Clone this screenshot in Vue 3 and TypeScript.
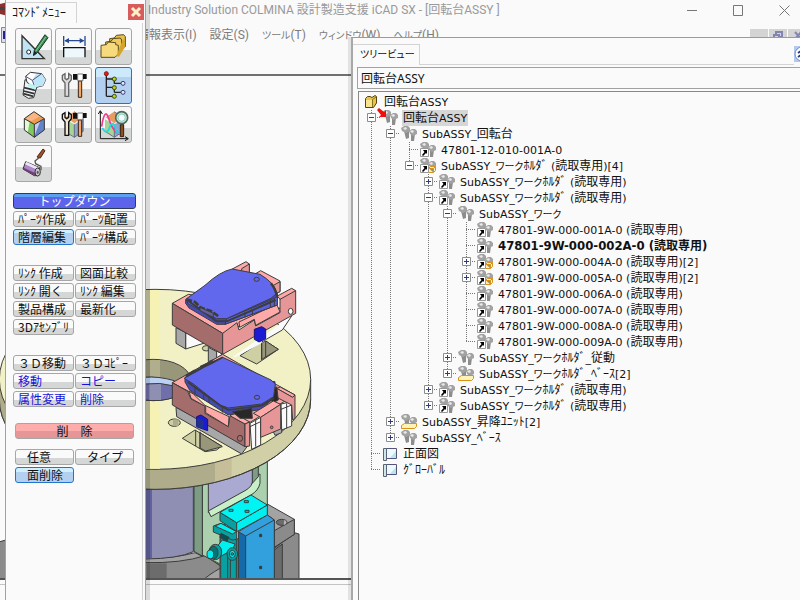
<script setup lang="ts">
import { computed, ref } from 'vue'

interface Node {
  level: number
  text: string
  kind?: 'folder' | 'part' | 'view'
  sign?: '+' | '-'
  link?: boolean
  box?: boolean
  tray?: boolean
  active?: boolean
  bold?: boolean
}

const holder = 'SubASSY_ワークﾎﾙﾀﾞ (読取専用)'
const part = (id: string, extra: Partial<Node> = {}): Node => ({
  level: 6, text: `47801-9W-000-${id}-0 (読取専用)`, link: true, ...extra,
})

const nodes: Node[] = [
  { level: 0, text: '回転台ASSY', kind: 'folder' },
  { level: 1, text: '回転台ASSY', sign: '-', active: true },
  { level: 2, text: 'SubASSY_回転台', sign: '-' },
  { level: 3, text: '47801-12-010-001A-0', link: true },
  { level: 3, text: `${holder}[4]`, sign: '-', link: true, box: true },
  { level: 4, text: holder, sign: '+', link: true },
  { level: 4, text: holder, sign: '-', link: true },
  { level: 5, text: 'SubASSY_ワーク', sign: '-' },
  part('001A'),
  part('002A', { bold: true }),
  { ...part('004A', { sign: '+', box: true }), text: '47801-9W-000-004A-0 (読取専用)[2]' },
  { ...part('005A', { sign: '+', box: true }), text: '47801-9W-000-005A-0 (読取専用)[2]' },
  part('006A'),
  part('007A'),
  part('008A'),
  part('009A'),
  { level: 5, text: 'SubASSY_ワークﾎﾙﾀﾞ_従動', sign: '+' },
  { level: 5, text: 'SubASSY_ワークﾎﾙﾀﾞ_ﾍﾞｰｽ[2]', sign: '+', tray: true },
  { level: 4, text: holder, sign: '+', link: true },
  { level: 4, text: holder, sign: '+', link: true },
  { level: 2, text: 'SubASSY_昇降ﾕﾆｯﾄ[2]', sign: '+', tray: true },
  { level: 2, text: 'SubASSY_ﾍﾞｰｽ', sign: '+' },
  { level: 1, text: '正面図', kind: 'view' },
  { level: 1, text: 'ｸﾞﾛｰﾊﾞﾙ', kind: 'view' },
]

const closed = ref<number[]>([])
function toggle(i: number) {
  closed.value = closed.value.includes(i) ? closed.value.filter(n => n !== i) : [...closed.value, i]
}

// Splits a label into runs so that full-width kana can be set tighter than kanji.
function runs(text: string) {
  return (text.match(/[ァ-ヶー]+|[\u3000-\u30a0\u4e00-\u9fff\uff61-\uff9f]+|[\x00-\x7f]+/g) ?? []).map(t => ({
    t,
    c: /^[ァ-ヶー]/.test(t) ? 'kana' : /^[\x00-\x7f]/.test(t) ? 'latin' : 'han',
  }))
}

const rows = computed(() => {
  const shown: { node: Node; id: number }[] = []
  let hide = Infinity
  nodes.forEach((node, id) => {
    if (node.level > hide) return
    hide = closed.value.includes(id) ? node.level : Infinity
    shown.push({ node, id })
  })
  return shown.map(({ node, id }, i) => {
    const guides: string[] = []
    for (let c = 1; c <= node.level; c++) {
      const next = shown.slice(i + 1).find(r => r.node.level <= c)
      const goesOn = next !== undefined && next.node.level === c
      if (c < node.level) guides.push(goesOn ? 'full' : 'none')
      else guides.push(goesOn ? 'full arm' : 'half arm')
    }
    const sign = node.sign === '-' && closed.value.includes(id) ? '+' : node.sign
    return { ...node, id, guides, sign, runs: runs(node.text) }
  })
})

const menus = ['情報表示(I)', '設定(S)', 'ツール(T)', 'ウィンドウ(W)', 'ヘルプ(H)'].map(runs)
const tools = ['スケッチ', '寸法', 'フォルダ', 'ボルト', '工具', 'ツリー', 'ソリッド', 'ソリッド編集', '解析', '塗装']

interface Cmd { t: string; on?: boolean; blue?: boolean }
const groups: { items: Cmd[] }[] = [
  { items: [{ t: 'ﾊﾟｰﾂ作成' }, { t: 'ﾊﾟｰﾂ配置' }, { t: '階層編集', on: true }, { t: 'ﾊﾟｰﾂ構成' }] },
  { items: [{ t: 'ﾘﾝｸ 作成' }, { t: '図面比較' }, { t: 'ﾘﾝｸ 開く' }, { t: 'ﾘﾝｸ 編集' }, { t: '製品構成' }, { t: '最新化' }, { t: '3Dｱｾﾝﾌﾞﾘ' }] },
  { items: [{ t: '３Ｄ移動' }, { t: '３Ｄｺﾋﾟｰ' }, { t: '移動', blue: true }, { t: 'コピー', blue: true }, { t: '属性変更', blue: true }, { t: '削除', blue: true }] },
]
const last: Cmd[] = [{ t: '任意' }, { t: 'タイプ' }, { t: '面削除', on: true }]
const path = ref('回転台ASSY')
</script>

<template>
  <div class="desktop">
    <div class="app">
      <header class="title">
        <svg class="logo" width="16" height="16"><path d="M0 2L8 0V14L0 12Z" fill="#8c3030" /><path d="M0 5H8V8H0Z" fill="#444" /></svg>
        <span class="caption">Industry Solution COLMINA 設計製造支援 iCAD SX - [回転台ASSY ]</span>
        <button class="win" aria-label="最小化"><svg width="11" height="11"><path d="M0 5.5H10" /></svg></button>
        <button class="win" aria-label="最大化"><svg width="11" height="11"><path d="M.5 .5H9.5V10.5H.5Z" /></svg></button>
        <button class="win" aria-label="閉じる"><svg width="11" height="11"><path d="M.5 .5L10.5 10.5M10.5 .5L.5 10.5" /></svg></button>
      </header>
      <nav class="menubar">
        <svg class="logo" width="16" height="16"><path d="M1.500 .5H15.500V15.500H1.500Z" fill="#dde" stroke="#888" /><path d="M3 4H12V12H3Z" fill="#22228c" /></svg>
        <button v-for="(m, i) in menus" :key="i" class="menu"><span v-for="(r, j) in m" :key="j" :class="r.c">{{ r.t }}</span></button>
        <span class="mdi">
          <button aria-label="子ウィンドウ最小化"><svg width="18" height="14"><path d="M5 9H11" /></svg></button>
          <button aria-label="子ウィンドウ復元"><svg width="18" height="14"><path d="M7 6V3H13V8H11M5 6H10V11H5Z" /></svg></button>
          <button aria-label="子ウィンドウ閉じる"><svg width="18" height="14"><path d="M7 3L13 10M13 3L7 10" /></svg></button>
        </span>
      </nav>
      <main class="viewport">
        <svg class="scene" width="352" height="502" viewBox="0 76 352 502">
          <g transform="translate(145 250) scale(.33333)" stroke="#3c3c3c" stroke-width="3" stroke-linejoin="round">
            <!-- grey base, column and bracket -->
            <path d="M-500 900L-432 874L-380 860V1000H-500Z" fill="#8b8b8b" />
            <path d="M0 925Q90 925 150 908L225 945V1000H-60V925Z" fill="#a3a3a3" />
            <path d="M0 938Q110 940 180 917L225 947V955Q190 975 175 990H0Z" fill="#8b8b8b" />
            <path d="M5 940H65V990H5Z" fill="#6c6c6c" stroke="none" />
            <path d="M172 690L367 620V770L225 830V942L172 915Z" fill="#aad0ae" />
            <path d="M147 690H172V918L147 904Z" fill="#7c9c84" />
            <path d="M190 690L325 640V700Q320 714 300 725L190 788Z" fill="#a9a9d2" />
            <path d="M190 783L300 722Q324 710 324 685L345 672V700Q340 722 318 735L225 785L198 800Z" fill="#c8f0c8" />
            <path d="M322 650H340V680L322 700Z" fill="#7c9c84" />
            <path d="M-30 690H145V905Q100 926 0 927H-30Z" fill="#8f8fb4" />
            <path d="M-30 690H21V925H-30Z" fill="#62629c" stroke="none" />
            <!-- grey bracket on the right -->
            <path d="M388 895L448 848L462 852V1000H388Z" fill="#8b8b8b" />
            <path d="M388 900L412 882V1000H388Z" fill="#6c6c6c" />
            <path d="M367 762L448 808V853L388 892V810L367 795Z" fill="#a3a3a3" />
            <path d="M388 842L448 808V853L388 892Z" fill="#8b8b8b" />
            <ellipse cx="410" cy="817" rx="16" ry="9" fill="#6c6c6c" />
            <path d="M418 809Q432 818 416 826Z" fill="#b8b8b8" stroke="none" />
            <!-- blue cylinder body -->
            <path d="M280 845L367 795L388 810V1000H280Z" fill="#32a0dc" />
            <path d="M280 845L302 858V1000H280Z" fill="#146aa8" />
            <path d="M302 858L388 810" fill="none" />
            <path d="M344 853h6v7h-6zM344 949h6v7h-6z" fill="#333" />
            <!-- cyan head and fittings -->
            <path d="M227 840L280 868V1000H227Z" fill="#08a0a0" />
            <path d="M248 890V1000M256 890V1000M274 870V1000" fill="none" />
            <path d="M225 787L275 818V845L225 812Z" fill="#08a0a0" />
            <path d="M275 818L367 765V795L275 845Z" fill="#00f0f0" />
            <path d="M225 787L318 735L367 765L275 818Z" fill="#00f4f4" />
            <path d="M298 752h12v6h-12zM252 778h12v6h-12zM300 781h12v6h-12z" fill="#0cc" />
            <path d="M205 828L228 820L275 845V868L262 870L205 846Z" fill="#08a0a0" />
            <path d="M210 828L228 820L275 845L262 852Z" fill="#00f0f0" />
            <path d="M228 850L252 862L246 874L225 862Z" fill="#055" />
            <path d="M232 870L270 882L262 900L225 920L212 895Z" fill="#00f0f0" />
            <ellipse cx="211" cy="906" rx="19" ry="23" fill="#08a0a0" />
            <ellipse cx="206" cy="908" rx="13" ry="19" fill="#067474" />
            <ellipse cx="196" cy="913" rx="10" ry="13" fill="#00f0f0" />
            <ellipse cx="262" cy="912" rx="16" ry="19" fill="#08a0a0" />
            <ellipse cx="262" cy="912" rx="9" ry="11" fill="#00f0f0" />
            <circle cx="262" cy="912" r="4" fill="#08a0a0" />
            <!-- turntable -->
            <path d="M-437 388V448A467 270 0 0 0 497 448V388Z" fill="#d0cfa6" />
            <path d="M-437 388V448A467 270 0 0 0 210 697V630L30 500Z" fill="#aeac8a" stroke="none" />
            <path d="M210 630V697Q240 690 260 682V620Z" fill="#c5be98" stroke="none" />
            <path d="M-437 448A467 270 0 0 0 497 448" fill="none" />
            <ellipse cx="30" cy="388" rx="467" ry="270" fill="#f1f1c5" />
            <path d="M0 120H15V657H0Z" fill="#c8c8a2" stroke="none" />
            <path d="M15 120H45V656H15Z" fill="#f5f2b4" stroke="none" />
            <ellipse cx="25" cy="390" rx="112" ry="62" fill="#98977a" />
            <path d="M15 330H45V390H15Z" fill="#b0ae8c" stroke="none" />
            <path d="M0 382Q40 378 88 398V442Q50 456 0 450Z" fill="#6f6faa" />
            <path d="M12 398H48V450H12Z" fill="#8f8fb4" stroke="none" />
            <path d="M0 382Q40 378 88 392V408Q45 396 0 402Z" fill="#bcd0f4" />
            <!-- pockets in the table -->
            <path d="M285 317L350 275L365 275L400 298L335 342Z" fill="#cfcfa4" />
            <path d="M362 273L400 298L350 328V278Z" fill="#98977a" />
            <path d="M350 270V330M362 270V322" fill="none" />
            <path d="M112 565L150 540L230 588L215 600L180 605Z" fill="#cfcfa4" />
            <path d="M165 548L232 590L182 603L165 594Z" fill="#98977a" />
            <path d="M152 540V588M165 545V595" fill="none" />
            <ellipse cx="88" cy="518" rx="18" ry="11" fill="#cfcfa4" />
            <path d="M84 508H100V528H84Z" fill="#aeac8a" stroke="none" />
            <!-- upper fixture -->
            <path d="M262 322L440 198L412 240L340 285L270 322Z" fill="#fafafa" stroke="none" />
            <path d="M440 198L412 240L350 276" fill="none" />
            <ellipse cx="184" cy="295" rx="12" ry="8" fill="#cfcfa4" />
            <path d="M122 248L185 277L122 297Z" fill="#fafafa" />
            <path d="M93 233L122 248V297L93 280Z" fill="#a8a8a8" />
            <path d="M190 292L215 305V325L190 335Z" fill="#a8a8a8" />
            <path d="M215 303L232 312L215 325Z" fill="#fafafa" />
            <path d="M262 57L303 35L313 42V80L290 75Z" fill="#ffa9a9" />
            <path d="M290 56L313 42V75L290 70Z" fill="#e69696" />
            <path d="M325 75L347 62L405 93V125L390 130Z" fill="#ffa9a9" />
            <path d="M375 112L405 95V125L390 132Z" fill="#e69696" />
            <path d="M82 160L130 133L405 175L233 250Z" fill="#ffa9a9" />
            <path d="M82 160L233 250V313L82 225Z" fill="#a56c6c" />
            <path d="M233 250L276 218L282 240L328 210L332 228L405 188V140L452 122V190L233 313Z" fill="#e69696" />
            <path d="M397 138L440 115L452 122L405 148Z" fill="#ffa9a9" />
            <path d="M282 216L395 162L405 186L332 226L328 208L284 232Z" fill="#ffa9a9" />
            <ellipse cx="437" cy="184" rx="7" ry="9" fill="#fafafa" />
            <path d="M122 150V160L132 174L215 223H240L397 165V130L370 110Z" fill="#464bb4" />
            <path d="M245 206L378 150L397 140V165L240 223Z" fill="#5960dc" />
            <path d="M300 186V202M322 178V194M376 150V172M388 145V168" fill="none" />
            <path d="M122 148L180 106Q225 64 262 57L345 73Q388 98 396 130L378 145L245 206H215L130 162Z" fill="#6168ee" />
            <path d="M128 152L160 174L215 214H245L392 150" fill="none" stroke-width="6" />
            <path d="M124 148L150 156L166 172L200 184L222 200" fill="none" stroke-width="8" stroke-dasharray="18 5" />
            <path d="M378 100Q392 118 396 140" fill="none" stroke-width="7" />
            <path d="M165 172L205 190V202L165 182Z" fill="#62629c" />
            <ellipse cx="335" cy="88" rx="8" ry="6" fill="none" />
            <path d="M328 238L350 230L362 237V266L342 276L328 268Z" fill="#1b1bd4" stroke="#141478" />
            <!-- lower fixture -->
            <path d="M93 472L310 585L290 612L95 500Z" fill="#a8a8a8" />
            <path d="M385 545L410 530V548L390 556Z" fill="#a8a8a8" />
            <path d="M82 398L233 313L280 340L450 435L310 520Z" fill="#ffa9a9" />
            <path d="M315 520L347 502V585L320 598Z" fill="#fafafa" />
            <path d="M408 462L440 455V528L410 540Z" fill="#fafafa" />
            <path d="M332 508V590M425 460V535M315 530L347 515M408 478L440 465" fill="none" />
            <path d="M82 398L128 424L138 447L180 468V490L250 530L255 497L300 522V590L82 465Z" fill="#a56c6c" />
            <path d="M132 424L145 432L180 466L252 500L250 530L182 488L182 470L138 445Z" fill="#ffa9a9" />
            <path d="M255 497L268 490L314 516L300 522Z" fill="#ffa9a9" />
            <path d="M300 522L314 516V588L300 590Z" fill="#e69696" />
            <ellipse cx="285" cy="565" rx="8" ry="9" fill="none" />
            <path d="M395 415L406 411L450 435L443 442Z" fill="#ffa9a9" />
            <path d="M395 415L443 442L450 435V505L443 510L440 465L395 442Z" fill="#e69696" />
            <path d="M120 383V396L135 422L225 480L250 495L350 478L390 440V395Z" fill="#464bb4" />
            <path d="M375 430L395 410L400 450L382 460ZM262 485L320 475L322 505L285 505Z" fill="#282828" />
            <path d="M150 410V432M176 428V450M192 436V458M232 460V488" fill="none" />
            <path d="M118 385L165 352L233 322L378 390L391 402L386 440L350 462L250 474L225 465L145 402Z" fill="#6168ee" />
            <path d="M122 380L150 366L175 352L200 340L233 322M128 396L228 468L250 480L350 467L388 444" fill="none" stroke-width="5" />
            <path d="M124 378L150 362M166 352L206 334" fill="none" stroke-width="8" />
            <ellipse cx="336" cy="442" rx="8" ry="6" fill="none" />
            <path d="M325 490L385 453L407 463L347 502Z" fill="#ffa9a9" />
            <path d="M347 502L407 463V537L347 562Z" fill="#e69696" />
            <circle cx="380" cy="532" r="4" fill="#c77" />
            <path d="M155 500L168 495L188 508V542L176 538L155 530Z" fill="#1b1bd4" stroke="#141478" />
            <path d="M155 503L176 512V538L155 530Z" fill="#22308e" stroke="none" />
          </g>
        </svg>
      </main>
      <footer class="status"></footer>
    </div>

    <aside class="command">
      <div class="tabrow">
        <h2 class="tab">ｺﾏﾝﾄﾞﾒﾆｭｰ</h2>
        <button class="close" aria-label="コマンドメニューを閉じる"><svg width="16" height="16"><path d="M4 4L12 12M12 4L4 12" /></svg></button>
      </div>
      <div class="body">
        <div class="tools">
          <button v-for="(t, i) in tools" :key="t" class="tool" :class="{ on: i === 5 }" :aria-label="t">
            <svg viewBox="0 0 111 111" fill="none" stroke-width="3">
              <template v-if="i === 0">
                <path d="M21 23V92H88Z" fill="#bfe4f4" stroke="#333" stroke-width="4" />
                <circle cx="41" cy="72" r="6" fill="#fff" stroke="#222" />
                <path d="M90 20L99 29L66 75L56 82L58 67Z" fill="#3c8c54" stroke="#153a22" />
                <path d="M92 27L62 70" stroke="#8fd0a0" />
                <path d="M58 68L65 75L54 85Z" fill="#222" />
              </template>
              <template v-else-if="i === 1">
                <path d="M26 24V54M90 24V54M30 38H86" stroke="#244a94" stroke-width="4" />
                <path d="M28 38L42 30V46ZM88 38L74 30V46Z" fill="#244a94" />
                <path d="M26 88V59H90V88" fill="#eef8fc" stroke="#111" stroke-width="4" />
              </template>
              <template v-else-if="i === 2">
                <g stroke="#5a4a1c" fill="#e8c04c">
                  <path d="M44 70V32L58 30L64 22L86 20L91 26V56L78 68Z" />
                  <path d="M32 78V42L48 40L54 32L76 30L80 36V66L66 78Z" fill="#f0cc60" />
                  <path d="M18 88V52L34 50L40 42L62 44V50L70 52V78L60 88Z" fill="#f6da7c" />
                  <path d="M64 84L78 48L90 28V58L72 86Z" fill="#d4a52c" stroke="none" />
                </g>
              </template>
              <template v-else-if="i === 3">
                <path d="M30 38L24 84L40 94L56 92L68 52Z" fill="#eef4f6" stroke="#333" />
                <path d="M27 62L62 70M26 72L58 80M25 80L55 88" stroke="#333" stroke-width="5" />
                <path d="M32 28L46 16L80 20L92 38L84 56L60 62L36 46Z" fill="#fff" stroke="#333" />
                <path d="M62 22L80 20L92 38L84 56L64 60L52 40Z" fill="#bfe6f8" />
                <path d="M32 28L52 40L60 62M52 40L80 20" stroke="#557" />
                <path d="M42 48L66 58L60 68L38 58Z" fill="#b8f4f4" />
              </template>
              <template v-else-if="i === 6">
                <path d="M57 17L88 38L58 55L28 38Z" fill="#f09a50" />
                <path d="M57 17L76 30L50 45L28 38Z" fill="#f8b684" />
                <path d="M28 38L58 55V94L28 72Z" fill="#80c860" />
                <path d="M28 38L44 47L38 80L28 72Z" fill="#e4f8dc" />
                <path d="M58 55L88 38V72L58 94Z" fill="#6482c8" />
                <path d="M58 55L76 45L64 76L58 90Z" fill="#c4cff0" />
                <path d="M57 17L88 38V72L58 94L28 72V38ZM28 38L58 55L88 38M58 55V94" stroke="#333" />
              </template>
              <template v-else-if="i === 5">
                <path d="M34 20V88M34 36H56M34 61H56M34 88H56M58 49H82M58 76H82M58 40V50M58 64V76" stroke="#222" stroke-width="4" />
                <circle cx="34" cy="20" r="6" fill="#f01818" stroke="#722" />
                <g fill="#b8d418" stroke="#3c4c10"><circle cx="58" cy="36" r="6" /><circle cx="58" cy="62" r="6" /><circle cx="58" cy="88" r="6" /></g>
                <g fill="#d8ecfc" stroke="#3a3a6c"><circle cx="84" cy="49" r="6" /><circle cx="84" cy="76" r="6" /></g>
              </template>
              <template v-else-if="i === 9">
                <path d="M84 12L90 17L76 39L66 36Z" fill="#a0502c" stroke="#4c2818" />
                <path d="M72 38L60 48L62 56L78 64V76" stroke="#555" stroke-width="4" />
                <path d="M32 50L74 68L70 92L58 92L24 72Z" fill="#a888c8" stroke="#333" />
                <path d="M34 50L72 68L70 76L30 58Z" fill="#eee4f8" />
                <path d="M26 68L60 84L60 91L26 74Z" fill="#783c78" />
                <ellipse cx="68" cy="81" rx="8" ry="12" fill="#ccc" stroke="#333" />
                <ellipse cx="68" cy="82" rx="3" ry="5" fill="#555" />
              </template>
              <template v-if="i === 7 || i === 8">
                <path d="M57 17L84 34L58 52L32 34Z" fill="#e89c60" />
                <path d="M30 40L58 55V94L30 76Z" fill="#a8d494" />
                <path d="M58 55L86 40V76L58 94Z" fill="#8fa6cc" />
                <path d="M57 17L84 34V76L58 94L30 76M58 55V94" stroke="#446" stroke-width="2" />
              </template>
              <template v-if="i === 4 || i === 7">
                <path d="M30 88V48L22 38V25L30 20V34L35 38L41 34V20L49 26V38L41 48V88Z" :fill="i === 4 ? '#dcdcdc' : '#f4e4d4'" :stroke="i === 4 ? '#666' : '#111'" stroke-width="4" />
                <path d="M70 42H80V91H70Z" fill="#f4a868" stroke="#3a2418" />
                <path d="M54 21H68V38H54Z" fill="#111" />
                <path d="M68 21H84V41H68Z" fill="#fff" stroke="#777" />
                <path d="M84 21H95V36H84Z" fill="#111" />
              </template>
              <template v-if="i === 8">
                <path d="M16 16V98H98M10 24L16 14L22 24M90 92L100 98L90 104" stroke="#111" />
                <path d="M20 62C26 20 34 16 40 34S54 78 76 84" stroke="#f03a90" stroke-width="5" />
                <path d="M22 66C32 84 40 78 44 64S56 48 60 64S68 84 76 80" stroke="#20d8e8" stroke-width="5" />
                <path d="M76 56H86V92H76Z" fill="#8a5020" stroke="#3a2010" />
                <circle cx="80" cy="35" r="18" fill="#c8e8dc" stroke="#4c6c5c" stroke-width="5" />
                <circle cx="80" cy="35" r="11" fill="#f2fcfa" stroke="#8cb" />
              </template>
            </svg>
          </button>
        </div>

        <button class="cmd banner">トップダウン</button>
        <div v-for="(g, i) in groups" :key="i" class="group">
          <button v-for="c in g.items" :key="c.t" class="cmd" :class="{ on: c.on, blue: c.blue }">{{ c.t }}</button>
        </div>
        <div class="inset">
          <button class="cmd erase">削　除</button>
          <div class="group pick">
            <button v-for="c in last" :key="c.t" class="cmd" :class="{ on: c.on }">{{ c.t }}</button>
          </div>
        </div>
      </div>
    </aside>

    <section class="treeview">
      <div class="treetop">
        <h2 class="tab"><span class="kana">ツリービュー</span></h2>
        <span class="line"></span>
        <button class="help" aria-label="表示切替"><svg width="16" height="16"><rect width="16" height="16" fill="#b4c8f0" /><circle cx="8" cy="8" r="7" fill="#fff" stroke="#7088c0" /><path d="M4 7L7 5L10 7M4 11L7 9L10 11" fill="none" stroke="#223a80" stroke-width="2" /></svg></button>
      </div>
      <input v-model="path" class="path" aria-label="パス">
      <ul class="tree">
        <li v-for="r in rows" :key="r.id" class="row" :class="{ bold: r.bold, active: r.active }">
          <span v-for="(g, c) in r.guides" :key="c" class="guide" :class="g">
            <button v-if="r.sign && c === r.level - 1" class="exp" :aria-label="r.sign === '+' ? '展開' : '折りたたみ'" @click="toggle(r.id)">
              <svg width="9" height="9"><path d="M0.5 .5H8.5V8.5H.5Z" fill="#fff" stroke="#8c8c8c" /><path :d="r.sign === '+' ? 'M2 4.5H7M4.5 2V7' : 'M2 4.5H7'" stroke="#2c3c7c" /></svg>
            </button>
          </span>
          <svg class="icon" width="17" height="16" viewBox="0 0 17 16">
            <template v-if="r.kind === 'folder'">
              <path d="M2.500 4.500L4.500 2.500H7L9 3.500L12 1.500L13.500 2.500V9L10.500 13.500H2.500Z" fill="#e8c44c" stroke="#54440f" />
              <path d="M3 6H9V13H3Z" fill="#f8e48c" />
              <path d="M9.500 13V5.500L13 3" fill="none" stroke="#8a7020" />
            </template>
            <template v-else-if="r.kind === 'view'">
              <path d="M4 2.500H14.500V12.500H4Z" fill="#eef8fd" stroke="#557" />
              <path d="M8 12L14 5V12Z" fill="#b8e4f4" />
              <path d="M1.500 2.500H4.500V14.500H1.500Z" fill="#d4e4e8" stroke="#567" />
            </template>
            <template v-else>
              <path d="M3 5L8 4L8 12L5 13Z" fill="#8d8d8d" />
              <path d="M0 2L3 0H7L9 2V5L5 7L1 5Z" fill="#a2a2a2" />
              <path d="M2 2L5 1L6 3L4 4Z" fill="#e8e8e8" />
              <path d="M10 8L14 8L13 15L10 15Z" fill="#8d8d8d" />
              <path d="M8 5L11 3H14L16 5V8L12 10L9 8Z" fill="#a2a2a2" />
              <path d="M9 5L12 4L13 6L11 7Z" fill="#e8e8e8" />
              <path v-if="r.box" d="M8.500 10.500L10.500 8.500H15.500V12.500L13.500 14.500H8.500ZM13.500 14.500V10.500H9M13.500 10.500L15.500 8.500" fill="#fdf0b4" stroke="#d8921c" />
              <path v-if="r.tray" d="M.5 11.500L3.500 9.500H15.500V12.500L13.500 14.500H.5Z" fill="#fdf3b8" stroke="#d8921c" />
              <g v-if="r.link"><path d="M.5 6.500H8.500V14.500H.5Z" fill="#fff" stroke="#999" /><path d="M3 8H7V12L6 11L3 14L2 13L4.500 10Z" fill="#000" /></g>
              <path v-if="r.active" d="M-5 0L-3 -2L2 2L4 0V7H-3L-1 5Z" fill="#f40c0c" />
            </template>
          </svg>
          <span class="label"><span v-for="(p, j) in r.runs" :key="j" :class="p.c">{{ p.t }}</span></span>
        </li>
      </ul>
    </section>
  </div>
</template>

<style>
body { background: #fafafa; }
</style>

<style scoped>
.desktop { position: relative; min-height: 100vh; overflow: hidden; background: #fafafa; color: #111; font: 12px/16px "Noto Sans", "Noto Sans CJK JP", sans-serif; }
button { padding: 0; border: 0; background: none; font: inherit; color: inherit; }
svg { display: block; }
h2 { margin: 0; font: inherit; }
.kana { font-family: "Noto Sans CJK JP", sans-serif; font-size: 10px; font-feature-settings: "palt"; }

.app { display: flex; flex-direction: column; height: 100vh; }
.title { display: flex; align-items: center; height: 20px; color: #999; font-family: Roboto, "Noto Sans CJK JP", sans-serif; }
.logo { flex: none; }
.title .logo { margin-right: 132px; }
.caption { flex: 1; white-space: nowrap; }
.win { display: grid; width: 46px; height: 20px; place-items: center; }
.win svg { fill: none; stroke: #777; }
.win:last-child { margin-right: -7px; }
.menubar { display: flex; flex: none; align-items: flex-start; gap: 13px; box-sizing: border-box; height: 56px; padding-top: 7px; border-bottom: 2px solid #707070; color: #7c7c7c; font-family: Roboto, "Noto Sans CJK JP", sans-serif; }
.menubar .logo { margin-right: 108px; }
.menu { height: 16px; white-space: nowrap; line-height: 16px; }
.mdi { display: flex; gap: 1px; margin-left: auto; padding-top: 2px; }
.mdi button { width: 18px; height: 14px; background: #d4d4d4; overflow: hidden; }
.mdi button:last-child { width: 12px; }
.mdi svg { fill: none; stroke: #8484b0; stroke-width: 2; }
.viewport { flex: 1; min-height: 0; overflow: hidden; border-bottom: 2px solid #555; }
.status { flex: none; box-sizing: border-box; height: 16px; margin-top: 4px; border-top: 1px solid #c4c4c4; }

.command { position: absolute; left: 5px; top: 0; bottom: 0; width: 141px; box-sizing: border-box; display: flex; flex-direction: column; background: #fafafa; border-left: 1px solid #a2a2a2; border-right: 1px solid #a2a2a2; box-shadow: 4px 0 0 #00000020; }
.tabrow { display: flex; justify-content: space-between; height: 23px; padding-right: 1px; }
.command .tab { width: 71px; box-sizing: border-box; margin-top: 2px; padding: 2px 0 0 6px; border-top: 1px solid #d4d4d4; border-right: 1px solid #d4d4d4; white-space: nowrap; }
.close { width: 16px; height: 16px; margin-top: 4px; background: #d85c5c; }
.close svg { fill: none; stroke: #fff0c8; stroke-width: 3; }
.body { flex: 1; margin-right: 2px; padding: 5px 6px 0 7px; border-right: 1px solid #d4d4d4; }
.tools { display: grid; grid-template-columns: repeat(3, 37px); gap: 2px 3px; padding-left: 2px; margin-bottom: 11px; }
.tool { width: 37px; height: 37px; border: 1px solid #a6a6a6; border-radius: 3px; background: linear-gradient(#f8f8f8 0 60%, #d5d7d6 60%); overflow: hidden; }
.tool svg { width: 37px; height: 37px; margin: -1px; }
.tool.on { border-color: #2274d0; background: linear-gradient(#cceafc 0 25%, #b4d0f0 25%); }
.cmd { height: 16px; padding: 0 0 0 4px; border: 1px solid #a6a6a6; border-radius: 3px; background: linear-gradient(#fafafa 0 60%, #d5d7d6 60%); font-family: "Noto Sans CJK JP", sans-serif; text-align: left; line-height: 14px; white-space: nowrap; overflow: hidden; }
.cmd.on { border-color: #2274d0; background: linear-gradient(#cff0fc 0 25%, #b4d0f0 25%); }
.cmd.blue { color: #1414d8; }
.cmd.banner { display: block; width: 100%; margin-bottom: 2px; padding: 0; border-color: #2c3c5c; background: linear-gradient(#5ca0f0 0 25%, #5c64ec 25%); color: #fff; text-align: center; }
.group { display: grid; grid-template-columns: 1fr 1fr; gap: 2px 1px; margin-bottom: 20px; }
.inset { padding: 0 2px; margin-top: -4px; }
.cmd.erase { display: block; width: 100%; margin-bottom: 10px; padding: 0; background: linear-gradient(#ffacac 0 50%, #e69696 50%); text-align: center; }
.pick .cmd { padding-left: 11px; }

.treeview { position: absolute; left: 351px; right: 0; top: 37px; bottom: 0; display: flex; flex-direction: column; background: #fafafa; border-top: 1px solid #9a9a9a; border-left: 2px solid #a8a8a8; box-shadow: -3px 0 0 #00000018; }
.treetop { display: flex; height: 27px; }
.treeview .tab { flex: none; width: 67px; box-sizing: border-box; margin-top: 6px; padding: 1px 0 0 7px; border-top: 1px solid #d4d4d4; border-right: 1px solid #d4d4d4; white-space: nowrap; line-height: 16px; }
.treeview .line { flex: 1; border-bottom: 1px solid #d4d4d4; }
.help { width: 6px; height: 16px; margin-top: 8px; overflow: hidden; }
.path { height: 22px; box-sizing: border-box; margin: 2px 0 2px 4px; padding: 0 3px; border: 1px solid #a2a2a2; border-right: 0; background: #fafafa; color: #111; font: inherit; outline: 0; }
.tree { flex: 1; margin: 0 0 0 5px; padding: 2px 0 0 3px; border-left: 1px solid #888; border-top: 1px solid #888; list-style: none; }
.row { display: flex; height: 16px; white-space: nowrap; }
.guide { position: relative; flex: none; width: 19px; height: 16px; }
.guide.full { background: repeating-linear-gradient(#777 0 1px, transparent 1px 2px) 9px 0 / 1px 16px no-repeat; }
.guide.half { background: repeating-linear-gradient(#777 0 1px, transparent 1px 2px) 9px 0 / 1px 8px no-repeat; }
.guide.arm::after { content: ""; position: absolute; left: 9px; right: 0; top: 7px; height: 1px; background: repeating-linear-gradient(90deg, #777 0 1px, transparent 1px 2px); }
.exp { position: absolute; z-index: 1; left: 5px; top: 3px; width: 9px; height: 9px; }
.icon { flex: none; margin: 0 3px 0 1px; overflow: visible; }
.label { padding: 0 1px; line-height: 16px; }
.latin { line-height: 1; }
.label .latin { font-family: "DejaVu Sans", sans-serif; font-size: 11px; }
.active .label { background: #d6d6d6; }
.bold .label { font-weight: 700; }
.bold .label .latin { font-family: "DejaVu Sans Condensed", "DejaVu Sans", sans-serif; font-size: 13px; }
</style>
